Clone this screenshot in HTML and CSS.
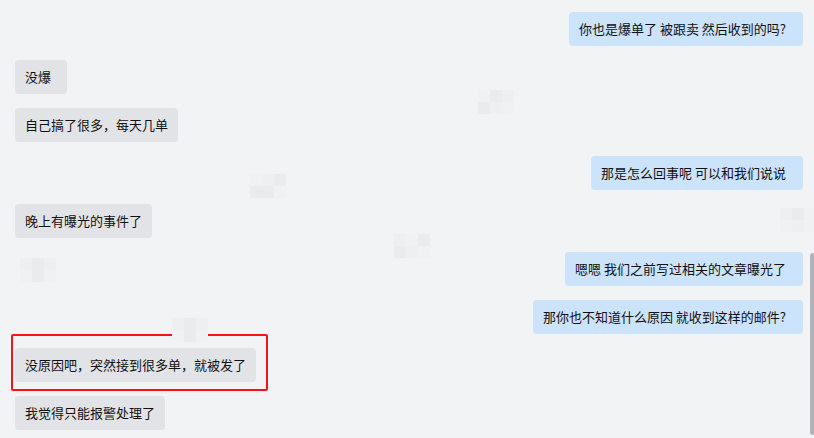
FILE: index.html
```html
<!DOCTYPE html>
<html lang="zh-CN">
<head>
<meta charset="utf-8">
<link rel="stylesheet" href="styles.css">
</head>
<body>
<div class="chat">
  <div class="row right"><div class="bubble">你也是爆单了 被跟卖 然后收到的吗?</div></div>
  <div class="row left"><div class="bubble short">没爆</div></div>
  <div class="row left"><div class="bubble">自己搞了很多，每天几单</div></div>
  <div class="row right"><div class="bubble">那是怎么回事呢 可以和我们说说</div></div>
  <div class="row left"><div class="bubble">晚上有曝光的事件了</div></div>
  <div class="row right"><div class="bubble">嗯嗯 我们之前写过相关的文章曝光了</div></div>
  <div class="row right"><div class="bubble">那你也不知道什么原因 就收到这样的邮件?</div></div>
  <div class="row left"><div class="bubble marked">没原因吧，突然接到很多单，就被发了</div></div>
  <div class="row left"><div class="bubble">我觉得只能报警处理了</div></div>
</div>
<div class="wm wm1"><i></i><i class="d"></i><i></i><i class="l"></i><i class="d"></i><i class="l"></i></div>
<div class="wm wm2"><i></i><i class="d"></i><i></i><i class="l"></i><i class="d"></i><i class="l"></i></div>
<div class="wm wm3"><i class="l"></i><i class="d"></i><i></i><i class="d"></i><i></i><i class="l"></i></div>
<div class="wm wm4"><i></i><i class="l"></i><i class="d"></i><i class="d"></i><i></i><i class="l"></i></div>
<div class="wm wm5"><i class="l"></i><i></i><i class="d"></i><i class="d"></i><i class="d"></i><i class="l"></i></div>
<div class="wm wm6"><i></i><i class="d"></i><i class="l"></i><i class="l"></i><i></i><i class="l"></i></div>
<div class="scrollbar"></div>
</body>
</html>
```
FILE: styles.css
```css
html, body {
  margin: 0;
  padding: 0;
  width: 814px;
  height: 438px;
  overflow: hidden;
  background: #f2f3f5;
  font-family: "Noto Sans CJK SC", "Microsoft YaHei", sans-serif;
  font-size: 13px;
  color: #111;
}
.chat {
  display: flex;
  flex-direction: column;
  gap: 14px;
  padding: 12px 11px 0 15px;
}
.row {
  display: flex;
}
.row.right {
  justify-content: flex-end;
}
.row.left {
  justify-content: flex-start;
}
.bubble {
  position: relative;
  height: 34px;
  box-sizing: border-box;
  line-height: 34px;
  padding: 0 10px;
  border-radius: 4px;
  white-space: nowrap;
}
.left .bubble {
  background: #e2e3e6;
}
.left .bubble.short {
  padding-right: 16px;
}
.right .bubble {
  background: #cce3fc;
  padding-right: 17px;
}
.marked::after {
  content: "";
  position: absolute;
  left: -4px;
  top: -14px;
  right: -12px;
  bottom: -9px;
  border: 2px solid #f5141c;
  border-radius: 2px;
}
.wm {
  position: absolute;
  display: grid;
  grid-template-columns: repeat(3, 12px);
  grid-auto-rows: 12px;
  pointer-events: none;
}
.wm i {
  display: block;
  background: #eeeff1;
}
.wm i.d {
  background: #eaebed;
}
.wm i.l {
  background: #f0f1f3;
}
.wm1 { left: 20px; top: 258px; }
.wm2 { left: 172px; top: 318px; }
.wm3 { left: 478px; top: 90px; }
.wm4 { left: 394px; top: 234px; }
.wm5 { left: 250px; top: 174px; }
.wm6 { left: 780px; top: 208px; }
.scrollbar {
  position: absolute;
  left: 810px;
  top: 253px;
  width: 6px;
  height: 182px;
  background: #b1b2b6;
  border-radius: 3px;
}
```
